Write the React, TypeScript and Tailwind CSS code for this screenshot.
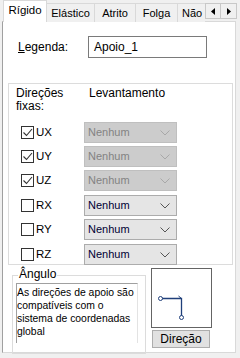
import React from "react";

const font = { fontFamily: '"Liberation Sans", Arial, sans-serif' };

function Chevron({ color }: { color: string }) {
  return (
    <svg width="10" height="6" viewBox="0 0 10 6" className="shrink-0">
      <path d="M0.5 0.5 L5 5 L9.5 0.5" fill="none" stroke={color} strokeWidth="1" />
    </svg>
  );
}

function Check({ checked }: { checked: boolean }) {
  return (
    <div className="w-[13px] h-[13px] border border-[#333333] bg-white flex items-center justify-center shrink-0">
      {checked && (
        <svg width="11" height="11" viewBox="0 0 11 11">
          <path d="M1.5 5.5 L4.5 8.5 L10 2" fill="none" stroke="#333333" strokeWidth="1.1" />
        </svg>
      )}
    </div>
  );
}

function Row({ label, checked, extra }: { label: string; checked: boolean; extra?: boolean }) {
  return (
    <div className={`flex items-center h-[21px] ${extra ? "mt-[1px]" : ""}`}>
      <div className="w-[75px] pl-[12px] flex items-center gap-[2px]">
        <Check checked={checked} />
        <span className="text-[11.5px] leading-none text-black">{label}</span>
      </div>
      <div
        className={
          checked
            ? "w-[93px] h-[21px] bg-[#cccccc] border border-[#bfbfbf] flex items-center justify-between pl-[3px] pr-[6px]"
            : "w-[93px] h-[21px] bg-[#e5e5e5] border border-[#acacac] flex items-center justify-between pl-[3px] pr-[6px]"
        }
      >
        <span className={checked ? "text-[11px] text-[#838383]" : "text-[11px] text-[#000033]"}>Nenhum</span>
        <Chevron color={checked ? "#a8a8a8" : "#555555"} />
      </div>
    </div>
  );
}

export default function App() {
  const tabs = [
    { t: "Elástico", w: "w-[48px]" },
    { t: "Atrito", w: "w-[41px]" },
    { t: "Folga", w: "w-[42px]" },
  ];
  return (
    <div className="w-[240px] h-[358px] bg-[#f0f0f0] text-black overflow-hidden" style={font}>
      {/* Tab strip */}
      <div className="flex items-end h-[22px] pl-[3px] relative z-10">
        <div className="w-[44px] h-[22px] bg-white border border-b-0 border-[#d9d9d9] flex items-center justify-center text-[11.5px] pb-[1px]">
          Rígido
        </div>
        {tabs.map((x) => (
          <div
            key={x.t}
            className={`${x.w} h-[19px] bg-[#f0f0f0] border border-l-0 border-b-0 border-[#d9d9d9] flex items-center justify-center text-[11px]`}
          >
            {x.t}
          </div>
        ))}
        <div className="w-[27px] h-[19px] bg-[#f0f0f0] border-t border-[#d9d9d9] overflow-hidden pl-[4px] flex items-center text-[11px] whitespace-nowrap">
          Não
        </div>
        <div className="absolute left-[205px] top-[3px] flex">
          <div className="w-[16px] h-[16px] bg-[#f0f0f0] border border-[#c8c8c8] flex items-center justify-center">
            <svg width="4" height="7" viewBox="0 0 4 7"><path d="M4 0 L0 3.5 L4 7 Z" fill="#000" /></svg>
          </div>
          <div className="w-[16px] h-[16px] bg-[#f0f0f0] border border-l-0 border-[#c8c8c8] flex items-center justify-center">
            <svg width="4" height="7" viewBox="0 0 4 7"><path d="M0 0 L4 3.5 L0 7 Z" fill="#000" /></svg>
          </div>
        </div>
      </div>

      {/* Panel */}
      <div className="ml-[2px] w-[234px] h-[332px] -mt-px bg-white border border-[#d9d9d9] border-l-[#a0a0a0] flex flex-col">
        {/* Legenda */}
        <div className="flex items-center mt-[14px] h-[22px]">
          <span className="ml-[15px] w-[70px] text-[12px]">
            <span className="underline">L</span>egenda:
          </span>
          <div className="w-[119px] h-[22px] border border-[#7a7a7a] flex items-center pl-[5px] text-[12px]">
            Apoio_1
          </div>
        </div>

        {/* Direções group */}
        <div className="ml-[5px] mt-[25px] w-[225px] h-[182px] border border-[#dcdcdc] flex flex-col">
          <div className="flex pt-[3px] text-[12px] leading-[13px]">
            <div className="w-[80px] pl-[7px]">
              <div>Direções</div>
              <div>fixas:</div>
            </div>
            <div>Levantamento</div>
          </div>
          <div className="flex flex-col gap-[3px] mt-[9px]">
            <Row label="UX" checked />
            <Row label="UY" checked />
            <Row label="UZ" checked />
            <Row label="RX" checked={false} extra />
            <Row label="RY" checked={false} />
            <Row label="RZ" checked={false} extra />
          </div>
        </div>

        {/* Bottom area */}
        <div className="flex mt-[3px] ml-[9px]">
          <div className="relative w-[134px] h-[79px] mt-[7px] border border-[#dcdcdc]">
            <span className="absolute left-[5px] -top-[8px] bg-white px-[1px] text-[12px] leading-[13px]">Ângulo</span>
            <div className="mt-[7px] ml-[3px] w-[122px] h-[60px] border-t border-l border-[#a0a0a0] border-r border-r-[#e3e3e3] text-[10.4px] leading-[13px] pt-[2px] whitespace-nowrap overflow-hidden">
              <div>As direções de apoio são</div>
              <div>compatíveis com o</div>
              <div>sistema de coordenadas</div>
              <div>global</div>
            </div>
          </div>
          <div className="ml-[5px] flex flex-col">
            <div className="w-[61px] h-[60px] border border-[#646464] bg-white">
              <svg width="59" height="58" viewBox="0 0 59 58">
                <path d="M10 29.5 H29.5 V48" fill="none" stroke="#1f3f7a" strokeWidth="1.3" />
                <path d="M26.5 27 L29.5 29.5" fill="none" stroke="#1f3f7a" strokeWidth="1" />
                <circle cx="8.5" cy="29.5" r="2" fill="white" stroke="#1f3f7a" strokeWidth="1" />
                <circle cx="29.5" cy="48.5" r="2" fill="white" stroke="#1f3f7a" strokeWidth="1" />
              </svg>
            </div>
            <div className="mt-[2px] ml-[1px] w-[58px] h-[18px] bg-[#e1e1e1] border border-[#adadad] flex items-center justify-center text-[12px]">
              Direção
            </div>
          </div>
        </div>
      </div>
    </div>
  );
}
